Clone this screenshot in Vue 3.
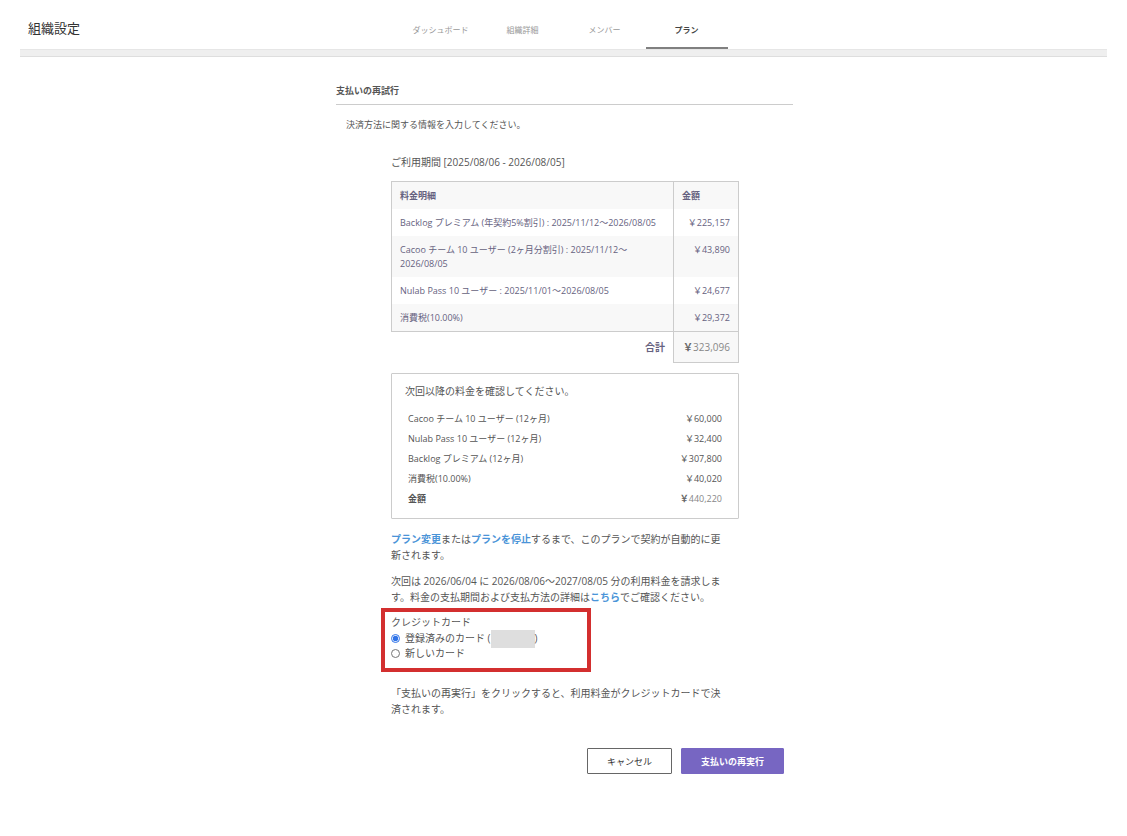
<template>
  <div class="page">
    <header class="page-header">
      <h1 class="page-title">組織設定</h1>
      <nav class="tabs">
        <a
          v-for="tab in tabs"
          :key="tab"
          href="#"
          class="tab"
          :class="{ active: tab === activeTab }"
          @click.prevent="activeTab = tab"
        >{{ tab }}</a>
      </nav>
    </header>
    <div class="header-bar"></div>

    <main class="content">
      <h2 class="section-title">支払いの再試行</h2>
      <p class="lead">決済方法に関する情報を入力してください。</p>

      <form class="payment-form" @submit.prevent>
        <p class="period">ご利用期間 [2025/08/06 - 2026/08/05]</p>

        <table class="detail-table">
          <thead>
            <tr>
              <th scope="col">料金明細</th>
              <th scope="col">金額</th>
            </tr>
          </thead>
          <tbody>
            <tr v-for="item in details" :key="item.name">
              <td>{{ item.name }}</td>
              <td class="amount">{{ yen + item.amount }}</td>
            </tr>
          </tbody>
          <tfoot>
            <tr>
              <th scope="row">合計</th>
              <td class="amount"><b>{{ yen }}</b>323,096</td>
            </tr>
          </tfoot>
        </table>

        <section class="next-box">
          <h3 class="next-title">次回以降の料金を確認してください。</h3>
          <table class="next-table">
            <tbody>
              <tr v-for="item in nextItems" :key="item.name">
                <td>{{ item.name }}</td>
                <td class="amount">{{ yen + item.amount }}</td>
              </tr>
              <tr class="next-total">
                <th scope="row">金額</th>
                <td class="amount"><b>{{ yen }}</b>440,220</td>
              </tr>
            </tbody>
          </table>
        </section>

        <p class="note"><a href="#">プラン変更</a>または<a href="#">プランを停止</a>するまで、このプランで契約が自動的に更新されます。</p>
        <p class="note">次回は 2026/06/04 に 2026/08/06〜2027/08/05 分の利用料金を請求します。料金の支払期間および支払方法の詳細は<a href="#">こちら</a>でご確認ください。</p>

        <div class="card-select" role="radiogroup" aria-labelledby="card-label">
          <p id="card-label" class="card-label">クレジットカード</p>
          <label class="card-option">
            <input v-model="card" type="radio" name="card" value="registered">
            <span>登録済みのカード (</span><span class="masked"></span><span>)</span>
          </label>
          <label class="card-option">
            <input v-model="card" type="radio" name="card" value="new">
            <span>新しいカード</span>
          </label>
        </div>

        <p class="note">「支払いの再実行」をクリックすると、利用料金がクレジットカードで決済されます。</p>
      </form>

      <div class="actions">
        <button type="button" class="btn">キャンセル</button>
        <button type="button" class="btn btn-primary">支払いの再実行</button>
      </div>
    </main>
  </div>
</template>

<script setup>
import { ref } from 'vue'

const tabs = ['ダッシュボード', '組織詳細', 'メンバー', 'プラン']
const activeTab = ref('プラン')
const card = ref('registered')

// full-width yen sign
const yen = '\uFFE5'

const details = [
  { name: 'Backlog プレミアム (年契約5%割引) : 2025/11/12〜2026/08/05', amount: '225,157' },
  { name: 'Cacoo チーム 10 ユーザー (2ヶ月分割引) : 2025/11/12〜2026/08/05', amount: '43,890' },
  { name: 'Nulab Pass 10 ユーザー : 2025/11/01〜2026/08/05', amount: '24,677' },
  { name: '消費税(10.00%)', amount: '29,372' },
]

const nextItems = [
  { name: 'Cacoo チーム 10 ユーザー (12ヶ月)', amount: '60,000' },
  { name: 'Nulab Pass 10 ユーザー (12ヶ月)', amount: '32,400' },
  { name: 'Backlog プレミアム (12ヶ月)', amount: '307,800' },
  { name: '消費税(10.00%)', amount: '40,020' },
]
</script>

<style>
body {
  margin: 0;
  background: #fff;
}
</style>

<style scoped>
.page {
  padding: 0 20px 60px;
  font-family: "Open Sans", "Noto Sans CJK JP", sans-serif;
  font-size: 10px;
  line-height: 16px;
  color: #555;
}

h1, h2, h3, p {
  margin: 0;
}

a {
  text-decoration: none;
}

.page-header {
  display: grid;
  grid-template-columns: 1fr auto 1fr;
}

.header-bar {
  height: 6px;
  border-top: 1px solid #e6e6e6;
  border-bottom: 1px solid #dedede;
  background: #efefef;
}

.page-title {
  padding: 18px 8px 0;
  font-size: 13px;
  line-height: 20px;
  font-weight: 400;
  color: #333;
}

.tabs {
  display: flex;
}

.tab {
  box-sizing: border-box;
  width: 82px;
  padding: 22px 0 9px;
  border-bottom: 2px solid transparent;
  font-size: 8px;
  text-align: center;
  color: #999;
}

.tab.active {
  border-bottom-color: #808080;
  font-weight: 700;
  color: #444;
}

.content {
  max-width: 457px;
  margin: 0 auto;
  padding: 26px 0 0 2px;
}

.section-title {
  padding-bottom: 5px;
  border-bottom: 1px solid #ccc;
  font-size: 9px;
}

.lead {
  margin: 12px 10px 0;
  font-size: 9px;
}

.payment-form {
  margin: 21px 54px 0 55px;
}

.detail-table {
  width: 100%;
  margin-top: 11px;
  border-collapse: collapse;
  font-size: 9px;
  line-height: 14px;
  color: #666280;
}

.detail-table th,
.detail-table td {
  padding: 7px 8px 6px;
  text-align: left;
  vertical-align: top;
}

.detail-table thead,
.detail-table tbody {
  border: 1px solid #ccc;
}

.detail-table thead {
  border-bottom: 0;
}

.detail-table tbody {
  border-top: 0;
}

.detail-table tr > :last-child {
  width: 48px;
  border-left: 1px solid #ccc;
}

.detail-table thead tr,
.detail-table tbody tr:nth-child(even) {
  background: #f8f8f8;
}

.detail-table tfoot {
  font-size: 10px;
}

.detail-table tfoot th {
  padding: 8px;
  text-align: right;
}

.detail-table tfoot td {
  padding: 8px;
  border: 1px solid #ccc;
  background: #f8f8f8;
  color: #888;
}

.detail-table .amount,
.next-table .amount {
  text-align: right;
}

.amount b {
  color: #666;
}

.next-box {
  margin: 10px 0 12px;
  padding: 9px 13px;
  border: 1px solid #ccc;
  border-radius: 1px;
}

.next-title {
  font-size: 10px;
  font-weight: 400;
}

.next-table {
  width: 100%;
  margin-top: 10px;
  border-collapse: collapse;
  font-size: 9px;
  line-height: 14px;
}

.next-table th,
.next-table td {
  padding: 3px;
  text-align: left;
}

.next-total .amount {
  color: #888;
}

.note {
  padding-right: 12px;
}

.note + .note {
  margin-top: 10px;
}

.note a {
  font-weight: 700;
  color: #4a94d8;
}

.card-select {
  box-sizing: border-box;
  width: 210px;
  margin: 3px 0 13px -10px;
  padding: 2px 6px 7px;
  border: 4px solid #d32f2f;
}

.card-label {
  margin-bottom: 1px;
}

.card-option {
  display: flex;
  align-items: center;
  line-height: 15px;
}

.card-option input {
  width: 9px;
  height: 9px;
  margin: 0 5px 0 0;
  accent-color: #2f73e8;
}

.masked {
  width: 44px;
  height: 18px;
  margin: -2px 0;
  background: #dedede;
}

.actions {
  display: flex;
  justify-content: flex-end;
  gap: 9px;
  margin: 31px 9px 0 0;
}

.btn {
  height: 26px;
  padding: 0 19px;
  border: 1px solid #666;
  border-radius: 1px;
  background: #fff;
  font-family: inherit;
  font-size: 9px;
  font-weight: 400;
  color: #333;
  cursor: pointer;
}

.btn-primary {
  border-color: #7766c2;
  background: #7766c2;
  font-weight: 700;
  color: #fff;
}
</style>
